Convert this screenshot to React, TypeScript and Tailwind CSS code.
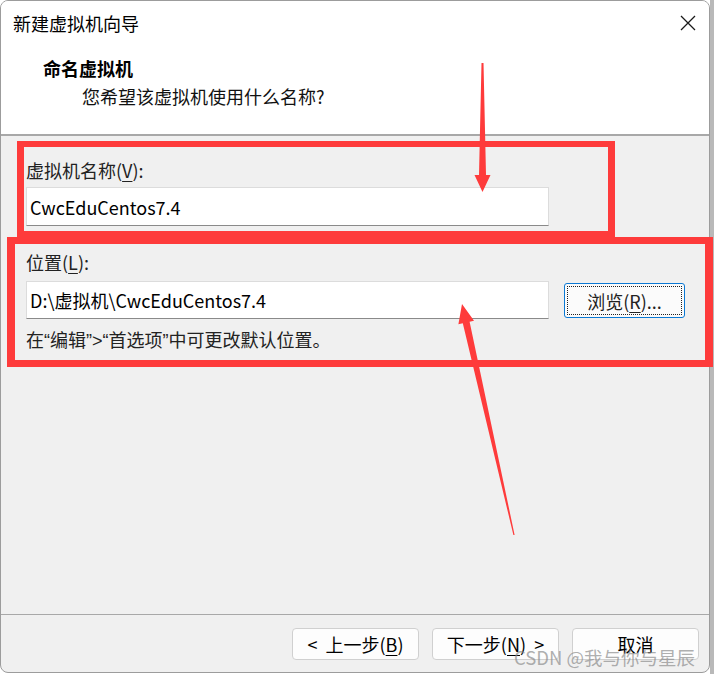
import React from "react";

const F = { fontFamily: '"Noto Sans CJK SC", "Noto Sans", sans-serif' };

function U({ c }: { c: string }) {
  return <span className="underline underline-offset-[3px] decoration-1">{c}</span>;
}

function Q({ c }: { c: string }) {
  return <span style={{ fontFamily: '"Liberation Sans", sans-serif' }}>{c}</span>;
}

export default function App() {
  return (
    <div className="relative w-[714px] h-[674px] bg-white flex overflow-hidden text-black" style={F}>
      {/* window */}
      <div className="w-[710px] h-[673px] border border-[#9c9c9c] rounded-[8px] overflow-hidden flex flex-col bg-[#f0f0f0]">
        {/* header */}
        <div className="bg-white h-[135px] border-b-2 border-[#a8a8a8] flex flex-col">
          <div className="flex items-center justify-between h-[24px] mt-[10px] pl-[12px] pr-[13px]">
            <span className="text-[18px] leading-[24px]">新建虚拟机向导</span>
            <svg width="16" height="16" viewBox="0 0 16 16" className="block">
              <path d="M1 1 L15 15 M15 1 L1 15" stroke="#1a1a1a" strokeWidth="1.3" fill="none" />
            </svg>
          </div>
          <div className="mt-[21px] pl-[42px] text-[18px] leading-[24px] font-bold">命名虚拟机</div>
          <div className="mt-[4px] pl-[81px] text-[18px] leading-[24px] text-[#111]">您希望该虚拟机使用什么名称?</div>
        </div>

        {/* body */}
        <div className="flex-1 flex flex-col pl-[25px] pt-[22px]">
          <div className="text-[18px] leading-[24px] text-[#222]">
            虚拟机名称(<U c="V" />):
          </div>
          <div className="mt-[5px] w-[523px] h-[39px] bg-white border border-[#dcdcdc] border-b-[#8a8a8a] flex items-center pl-[3px]">
            <span className="text-[18px] leading-[24px]">CwcEduCentos7.4</span>
          </div>
          <div className="mt-[24px] text-[18px] leading-[24px] text-[#222]">
            位置(<U c="L" />):
          </div>
          <div className="mt-[7px] flex items-start gap-[15px]">
            <div className="w-[523px] h-[38px] bg-white border border-[#dcdcdc] border-b-[#8a8a8a] flex items-center pl-[3px]">
              <span className="text-[18px] leading-[24px]">D:\虚拟机\CwcEduCentos7.4</span>
            </div>
            <button className="mt-[2px] w-[121px] h-[35px] bg-[#fbfbfb] border border-[#0a78d4] rounded-[3px] outline-dotted outline-1 outline-[#222] outline-offset-[-4px] flex items-center justify-center text-[18px] leading-[24px] text-[#222]">
              浏览(<U c="R" />)...
            </button>
          </div>
          <div className="mt-[8px] text-[18px] leading-[24px] text-[#222]">
            在<Q c="“" />编辑<Q c="”" /><Q c=">" /><Q c="“" />首选项<Q c="”" />中可更改默认位置。
          </div>
        </div>

        {/* footer */}
        <div className="border-t border-[#a8a8a8] pt-[13px] pb-[12px] pr-[10px] flex justify-end gap-[13px]">
          <button className="w-[127px] h-[32px] bg-[#fdfdfd] border border-[#d0d0d0] rounded-[4px] flex items-center justify-center text-[18px] leading-[24px] whitespace-pre">
            {"<  "}上一步(<U c="B" />)
          </button>
          <button className="w-[127px] h-[32px] bg-[#fdfdfd] border border-[#d0d0d0] rounded-[4px] flex items-center justify-center text-[18px] leading-[24px] whitespace-pre">
            下一步(<U c="N" />){"  >"}
          </button>
          <button className="w-[127px] h-[32px] bg-[#fdfdfd] border border-[#d0d0d0] rounded-[4px] flex items-center justify-center text-[18px] leading-[24px]">
            取消
          </button>
        </div>
      </div>
      <div className="w-[4px] h-full bg-[#b9b9b9]" />

      {/* annotations */}
      <div className="absolute left-[17px] top-[141px] w-[598px] h-[96px] border-x-[7px] border-y-[6px] border-[#fe3b3b]" />
      <div className="absolute left-[7px] top-[237px] w-[706px] h-[130px] border-x-[8px] border-y-[7px] border-[#fe3b3b]" />
      <svg className="absolute left-0 top-0 pointer-events-none" width="714" height="674" viewBox="0 0 714 674">
        <polygon
          points="481.5,63 483.5,63 486,175 490.5,175 482.5,192 474.5,175 479,175"
          fill="#fe3b3b"
        />
        <polygon
          points="462,304 474,320.7 469.6,321.7 514.6,534.9 513.4,535.1 462.8,323.3 458.4,324.3"
          fill="#fe3b3b"
        />
      </svg>

      {/* watermark */}
      <div className="absolute left-[514px] top-[646px] text-[18.5px] leading-[22px] text-[#8c8c8c]/70 whitespace-nowrap">
        CSDN @我与你与星辰
      </div>
    </div>
  );
}
